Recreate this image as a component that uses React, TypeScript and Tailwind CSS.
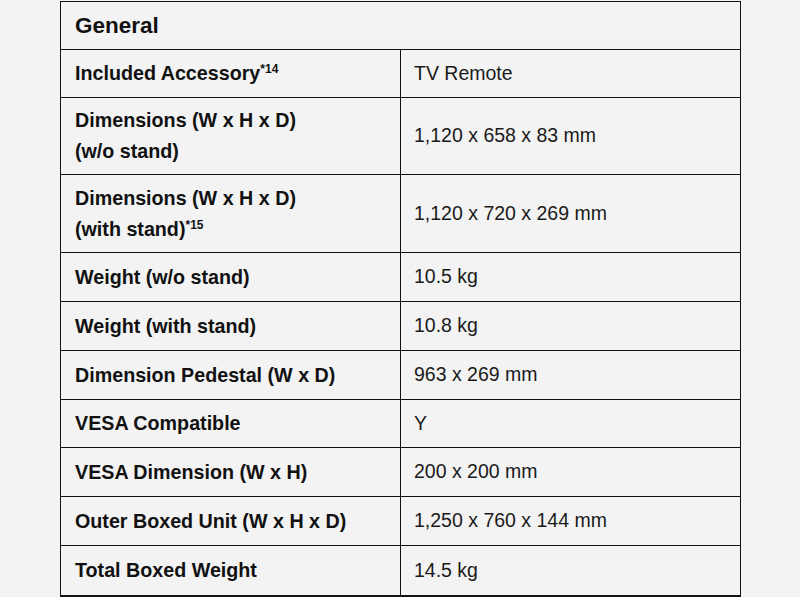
import React from "react";

type Row = { label: React.ReactNode; value: string; h: string };

const Sup = ({ children }: { children: React.ReactNode }) => (
  <span className="text-[12px] align-[7px] leading-none">{children}</span>
);

const rows: Row[] = [
  { label: <>Included Accessory<Sup>*14</Sup></>, value: "TV Remote", h: "h-[48px]" },
  { label: <>Dimensions (W x H x D)<br />(w/o stand)</>, value: "1,120 x 658 x 83 mm", h: "h-[77px]" },
  { label: <>Dimensions (W x H x D)<br />(with stand)<Sup>*15</Sup></>, value: "1,120 x 720 x 269 mm", h: "h-[78px]" },
  { label: "Weight (w/o stand)", value: "10.5 kg", h: "h-[49px]" },
  { label: "Weight (with stand)", value: "10.8 kg", h: "h-[49px]" },
  { label: "Dimension Pedestal (W x D)", value: "963 x 269 mm", h: "h-[49px]" },
  { label: "VESA Compatible", value: "Y", h: "h-[48px]" },
  { label: "VESA Dimension (W x H)", value: "200 x 200 mm", h: "h-[49px]" },
  { label: "Outer Boxed Unit (W x H x D)", value: "1,250 x 760 x 144 mm", h: "h-[49px]" },
  { label: "Total Boxed Weight", value: "14.5 kg", h: "h-[49px]" },
];

export default function App() {
  return (
    <div className="w-[800px] h-[597px] bg-[#f3f3f3] pt-px pl-[60px] font-['Liberation_Sans',Arial,sans-serif] text-[#111]">
      <div className="w-[681px] border-2 border-[#111] border-r-[1.5px] border-l-[1.5px] border-t-[1.5px]">
        <div className="h-[48px] flex items-center pl-[14px] border-b-[1.5px] border-[#111] text-[22.5px] font-bold">
          General
        </div>
        {rows.map((r, i) => (
          <div
            key={i}
            className={`flex ${r.h} ${i < rows.length - 1 ? "border-b-[1.5px]" : ""} border-[#111]`}
          >
            <div className="w-[340px] flex items-center pl-[14px] border-r-[1.5px] border-[#111] text-[19.7px] font-bold leading-[31px]">
              <div>{r.label}</div>
            </div>
            <div className="flex-1 flex items-center pl-[13px] text-[19.5px] text-[#1a1a1a]">
              {r.value}
            </div>
          </div>
        ))}
      </div>
    </div>
  );
}
